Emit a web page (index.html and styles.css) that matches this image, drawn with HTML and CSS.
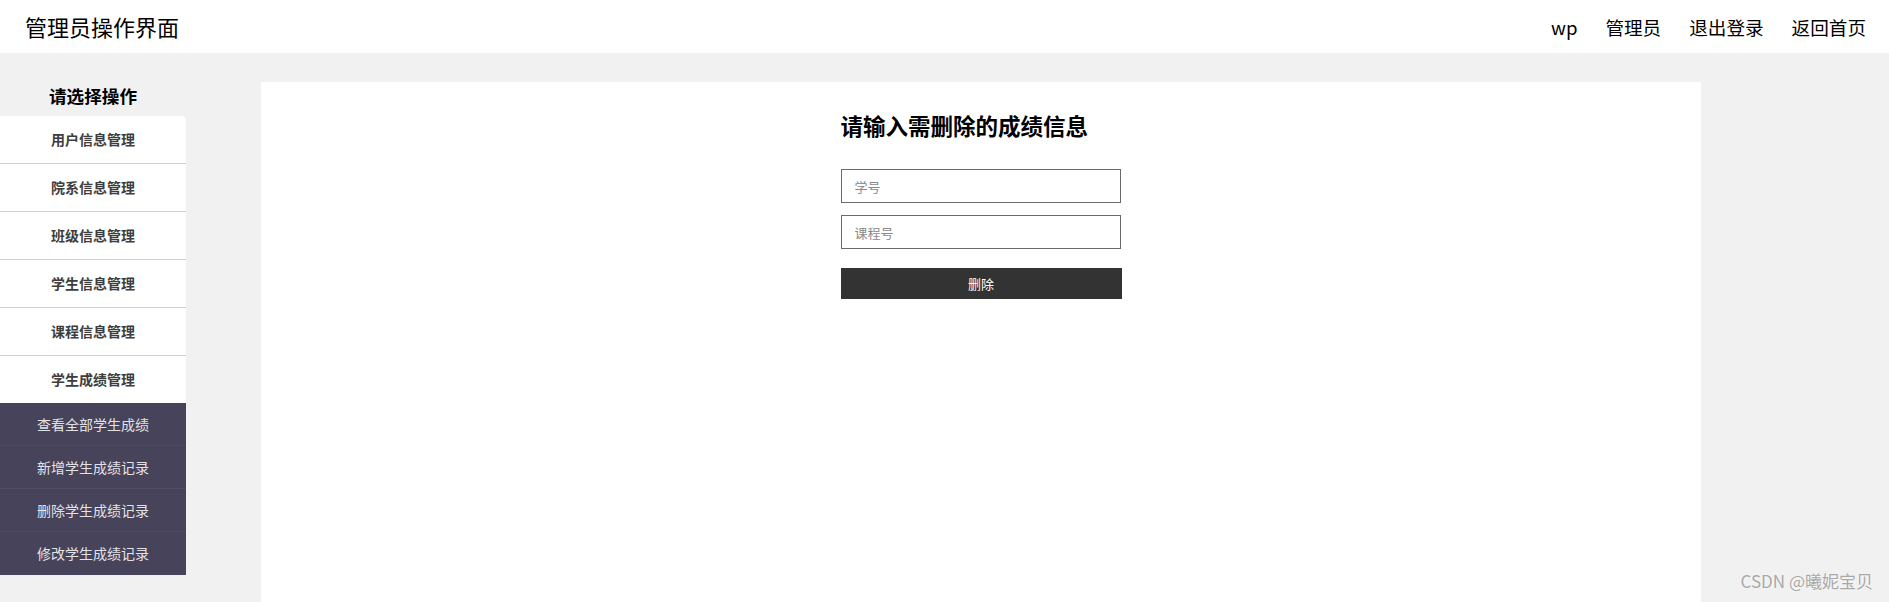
FILE: index.html
```html
<!DOCTYPE html>
<html lang="zh-CN">
<head>
    <meta charset="UTF-8">
    <title>管理员操作界面</title>
    <link rel="stylesheet" href="styles.css">
</head>
<body>
    <div class="header">
        <div class="title">管理员操作界面</div>
        <ul class="nav">
            <li>wp</li>
            <li>管理员</li>
            <li>退出登录</li>
            <li>返回首页</li>
        </ul>
    </div>
    <div class="main">
        <div class="side">
            <h3 class="side-title">请选择操作</h3>
            <ul class="menu">
                <li>用户信息管理</li>
                <li>院系信息管理</li>
                <li>班级信息管理</li>
                <li>学生信息管理</li>
                <li>课程信息管理</li>
                <li>学生成绩管理</li>
            </ul>
            <ul class="sub">
                <li>查看全部学生成绩</li>
                <li>新增学生成绩记录</li>
                <li>删除学生成绩记录</li>
                <li>修改学生成绩记录</li>
            </ul>
        </div>
        <div class="content">
            <form class="form">
                <h2>请输入需删除的成绩信息</h2>
                <input type="text" placeholder="学号">
                <input type="text" placeholder="课程号">
                <button type="button">删除</button>
            </form>
        </div>
    </div>
    <div class="mark">CSDN @曦妮宝贝</div>
</body>
</html>
```

FILE: styles.css
```css
*{
    padding: 0;
    margin: 0;
}
body{
    background: #f1f1f1;
    font-family: "Microsoft YaHei", "Noto Sans CJK SC", "Noto Sans", sans-serif;
    color: #000;
    height: 602px;
    overflow: hidden;
}
.header{
    display: flex;
    justify-content: space-between;
    align-items: center;
    height: 53px;
    padding: 0 23px 0 25px;
    background: #fff;
}
.header .title{
    font-size: 22px;
    line-height: 53px;
}
.nav{
    display: flex;
    gap: 28px;
    list-style: none;
    font-size: 18.6px;
}
.main{
    display: flex;
    align-items: flex-start;
}
.side{
    width: 186px;
    flex-shrink: 0;
}
.side-title{
    padding-top: 22px;
    line-height: 41px;
    text-align: center;
    font-size: 17.6px;
    font-weight: bold;
}
.menu{
    list-style: none;
    background: #fff;
    border-radius: 0 4px 0 0;
}
.menu li{
    height: 47px;
    line-height: 47px;
    border-bottom: 1px solid #cfcfcf;
    text-align: center;
    font-size: 14px;
    font-weight: bold;
    color: #3d3d3d;
}
.menu li:last-child{
    border-bottom: none;
}
.sub{
    list-style: none;
    background: #46435a;
}
.sub li{
    height: 42px;
    line-height: 42px;
    border-bottom: 1px solid #4e4b62;
    text-align: center;
    font-size: 14px;
    color: #e2e2e6;
}
.sub li:last-child{
    border-bottom: none;
    height: 43px;
}
.content{
    margin: 29px 0 0 75px;
    width: 1440px;
    height: 520px;
    background: #fff;
}
.form{
    width: 281px;
    margin: 0 auto;
    padding-top: 23px;
}
.form h2{
    font-size: 22.5px;
    font-weight: bold;
    line-height: 40px;
    margin-bottom: 24px;
    white-space: nowrap;
}
.form input{
    display: block;
    box-sizing: border-box;
    width: 280px;
    height: 34px;
    margin-bottom: 12px;
    padding: 0 13px;
    border: 1px solid #6a6a6a;
    font-family: inherit;
    font-size: 13px;
    outline: none;
}
.form input::placeholder{
    color: #8a8a8a;
}
.form button{
    display: block;
    width: 281px;
    height: 31px;
    margin-top: 19px;
    border: none;
    background: #333;
    color: #fff;
    font-family: inherit;
    font-size: 13px;
}
.mark{
    position: absolute;
    right: 16px;
    bottom: 9px;
    font-size: 17px;
    color: #a8a8a8;
    text-shadow: 0 0 2px #fff;
}
```
